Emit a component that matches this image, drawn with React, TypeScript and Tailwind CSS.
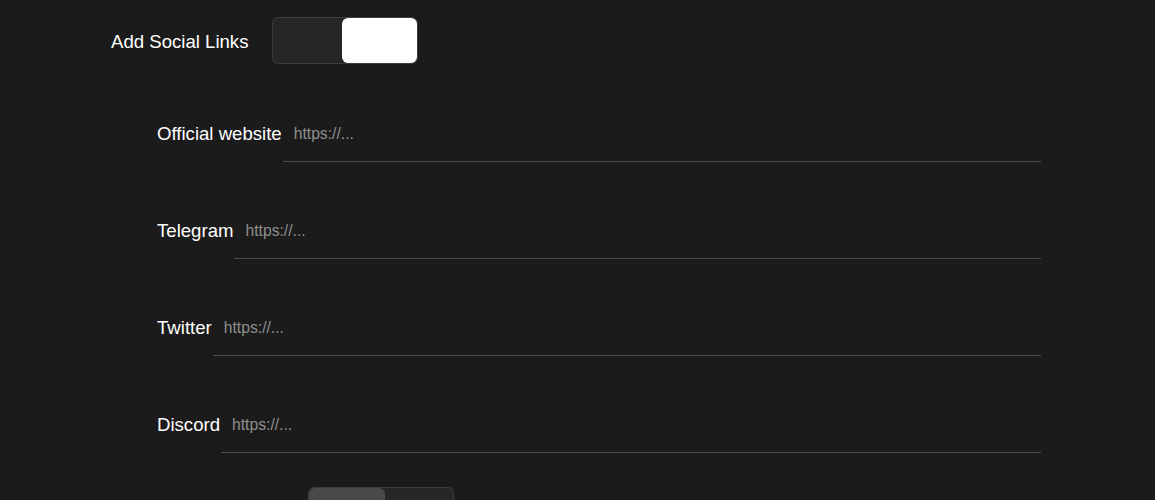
import React, { useState } from 'react';

const links = ['Official website', 'Telegram', 'Twitter', 'Discord'];

const Toggle: React.FC<{ on: boolean; onChange: (v: boolean) => void }> = ({ on, onChange }) => (
  <button
    type="button"
    onClick={() => onChange(!on)}
    className="flex h-[47px] w-[146px] shrink-0 rounded-md border border-[#3c3c3c] bg-[#262626] p-0"
  >
    {on ? (
      <>
        <span className="flex-1" />
        <span className="h-full w-[75px] rounded-md bg-white" />
      </>
    ) : (
      <>
        <span className="h-full w-[76px] rounded-md bg-[#4a4a4a]" />
        <span className="flex-1" />
      </>
    )}
  </button>
);

export default function App() {
  const [social, setSocial] = useState(true);
  const [extra, setExtra] = useState(false);

  return (
    <div className="min-h-screen bg-[#1b1b1b] text-white" style={{ fontFamily: '"Liberation Sans", Arial, sans-serif' }}>
      <div className="pl-[111px] pt-[17px] w-[1041px]">
        <div className="flex items-center gap-[24px]">
          <span className="text-[18.6px] translate-y-px">Add Social Links</span>
          <Toggle on={social} onChange={setSocial} />
        </div>

        <div className="mt-[42px] pl-[46px] flex flex-col gap-[41px]">
          {links.map((l) => (
            <div key={l} className="flex items-center">
              <span className="text-[18.6px] whitespace-nowrap">{l}</span>
              <input
                placeholder="https://..."
                className="ml-px h-[56px] flex-1 border-b border-[#4a4a4a] bg-transparent px-[11px] text-[15.7px] text-white outline-none placeholder:text-[#8e8e8e]"
              />
            </div>
          ))}

          <div className="flex items-center gap-[23px] -mt-[7px]">
            <span className="w-[128px] text-[18.6px] whitespace-nowrap">Token Info</span>
            <Toggle on={extra} onChange={setExtra} />
          </div>
        </div>
      </div>
    </div>
  );
}
